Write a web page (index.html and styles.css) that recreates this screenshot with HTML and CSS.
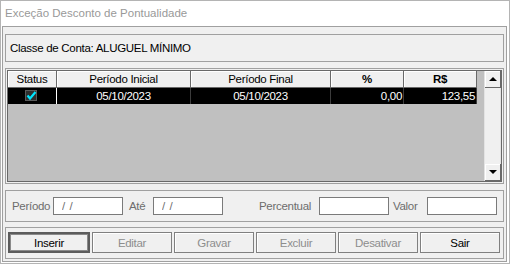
FILE: index.html
```html
<!DOCTYPE html>
<html>
<head>
  <title>Exceção Desconto de Pontualidade</title>
  <link rel="stylesheet" href="styles.css">
</head>
<body>
  <div class="window">
    <div class="titlebar">Exceção Desconto de Pontualidade</div>

    <div class="client">
      <div class="panel classe">Classe de Conta: ALUGUEL MÍNIMO</div>

      <div class="grid">
        <div class="grid-inner">
          <div class="grid-area">
            <div class="row head">
              <div class="cell">Status</div>
              <div class="cell">Período Inicial</div>
              <div class="cell">Período Final</div>
              <div class="cell bold">%</div>
              <div class="cell bold">R$</div>
            </div>
            <div class="row selected">
              <div class="cell status">
                <svg class="check" width="12" height="11" viewBox="0 0 12 11">
                  <rect x="0" y="0" width="12" height="11" fill="#5a5a5a"/>
                  <rect x="1" y="1" width="10" height="9" fill="#2e2e2e"/>
                  <path d="M2.5 5.5 L5 8.5 L10.5 2" fill="none" stroke="#00e5ff" stroke-width="2.2"/>
                </svg>
              </div>
              <div class="cell">05/10/2023</div>
              <div class="cell">05/10/2023</div>
              <div class="cell num">0,00</div>
              <div class="cell num">123,55</div>
            </div>
          </div>
          <div class="scrollbar">
            <div class="sb-btn"><span class="arrow-up"></span></div>
            <div class="sb-track"></div>
            <div class="sb-btn"><span class="arrow-down"></span></div>
          </div>
        </div>
      </div>

      <div class="panel fields">
        <label class="lbl lbl-periodo">Período</label>
        <input type="text" class="field" value="/ /">
        <label class="lbl lbl-ate">Até</label>
        <input type="text" class="field" value="/ /">
        <label class="lbl lbl-perc">Percentual</label>
        <input type="text" class="field" value="">
        <label class="lbl lbl-valor">Valor</label>
        <input type="text" class="field" value="">
      </div>

      <div class="panel buttons">
        <button class="btn default">Inserir</button>
        <button class="btn" disabled>Editar</button>
        <button class="btn" disabled>Gravar</button>
        <button class="btn" disabled>Excluir</button>
        <button class="btn" disabled>Desativar</button>
        <button class="btn">Sair</button>
      </div>
    </div>
  </div>
</body>
</html>
```

FILE: styles.css
```css
* {
  box-sizing: border-box;
}
body {
  margin: 0;
  background: #ffffff;
  font-family: "Liberation Sans", Arial, sans-serif;
  font-size: 11.5px;
  letter-spacing: -0.3px;
  color: #000;
}
.window {
  width: 510px;
  height: 264px;
  border: 1px solid #b4b4b4;
  background: #fff;
  display: flex;
  flex-direction: column;
}
.titlebar {
  height: 25px;
  line-height: 25px;
  padding-left: 4px;
  color: #999999;
  font-size: 11.5px;
  letter-spacing: 0;
}
.client {
  flex: 1;
  margin: 0 2px 1px 1px;
  border: 1px solid #a0a0a0;
  background: #f0f0f0;
  padding: 7px 2px 2px;
  display: flex;
  flex-direction: column;
}
.panel {
  border: 1px solid #a0a0a0;
}
.classe {
  height: 28px;
  line-height: 26px;
  padding-left: 4px;
}

/* grid */
.grid {
  margin-top: 6px;
  height: 116px;
  border: 1px solid #a0a0a0;
  padding: 1px;
}
.grid-inner {
  height: 100%;
  border: 1px solid #696969;
  display: flex;
}
.grid-area {
  flex: 1;
  background: #c0c0c0;
}
.row {
  display: grid;
  grid-template-columns: 49px 134px 140px 73px 73px;
}
.row .cell {
  overflow: hidden;
  white-space: nowrap;
  text-align: center;
}
.head .cell {
  height: 17px;
  line-height: 16px;
  background: #f0f0f0;
  border-right: 1px solid #696969;
  border-bottom: 1px solid #696969;
  box-shadow: inset 1px 1px #ffffff;
}
.head .bold {
  font-weight: bold;
}
.selected .cell {
  height: 16px;
  line-height: 16px;
  background: #000;
  color: #fff;
  border-right: 1px solid #3c3c3c;
}
.selected .status {
  border-right-color: #fff;
  padding: 2px 0 0 17px;
}
.check {
  display: block;
}
.selected .num {
  text-align: right;
  padding-right: 1px;
}

/* scrollbar */
.scrollbar {
  width: 17px;
  display: flex;
  flex-direction: column;
  background: #f0f0f0;
  border-left: 1px solid #e3e3e3;
}
.sb-btn {
  height: 17px;
  background: #f0f0f0;
  border-right: 1px solid #696969;
  border-bottom: 1px solid #696969;
  box-shadow: inset 1px 1px #ffffff;
  display: flex;
  align-items: center;
  justify-content: center;
}
.sb-track {
  flex: 1;
  border-right: 1px solid #e3e3e3;
}
.arrow-up {
  width: 0;
  height: 0;
  border-left: 4px solid transparent;
  border-right: 4px solid transparent;
  border-bottom: 4px solid #000;
}
.arrow-down {
  width: 0;
  height: 0;
  border-left: 4px solid transparent;
  border-right: 4px solid transparent;
  border-top: 4px solid #000;
}

/* fields */
.fields {
  margin-top: 6px;
  height: 32px;
  display: flex;
  align-items: center;
  padding-left: 6px;
}
.lbl {
  color: #6d6d6d;
}
.lbl-periodo { width: 41px; }
.lbl-ate { width: 24px; margin-left: 6px; }
.lbl-perc { width: 60px; margin-left: 36px; }
.lbl-valor { width: 34px; margin-left: 4px; }
.field {
  width: 70px;
  height: 18px;
  border: 1px solid #7a7a7a;
  background: #fff;
  padding: 0 0 0 8px;
  margin: 0;
  font-family: "Liberation Sans", Arial, sans-serif;
  font-size: 11.5px;
  letter-spacing: 0.5px;
  color: #6d6d6d;
  outline: none;
}

/* buttons */
.buttons {
  margin-top: 5px;
  height: 32px;
  display: flex;
  align-items: center;
  gap: 2px;
  padding: 0 3px 1px 2px;
}
.btn {
  flex: 1;
  height: 21px;
  margin: 0;
  padding: 0;
  background: #f0f0f0;
  border: 1px solid #808080;
  box-shadow: inset 1px 1px #ffffff;
  font-family: "Liberation Sans", Arial, sans-serif;
  font-size: 11.5px;
  letter-spacing: -0.3px;
  color: #000;
}
.btn:disabled {
  color: #8d8d8d;
}
.btn.default {
  border: 2px solid #5c5c5c;
  box-shadow: inset 0 0 0 1px #8a8a8a;
}
```
